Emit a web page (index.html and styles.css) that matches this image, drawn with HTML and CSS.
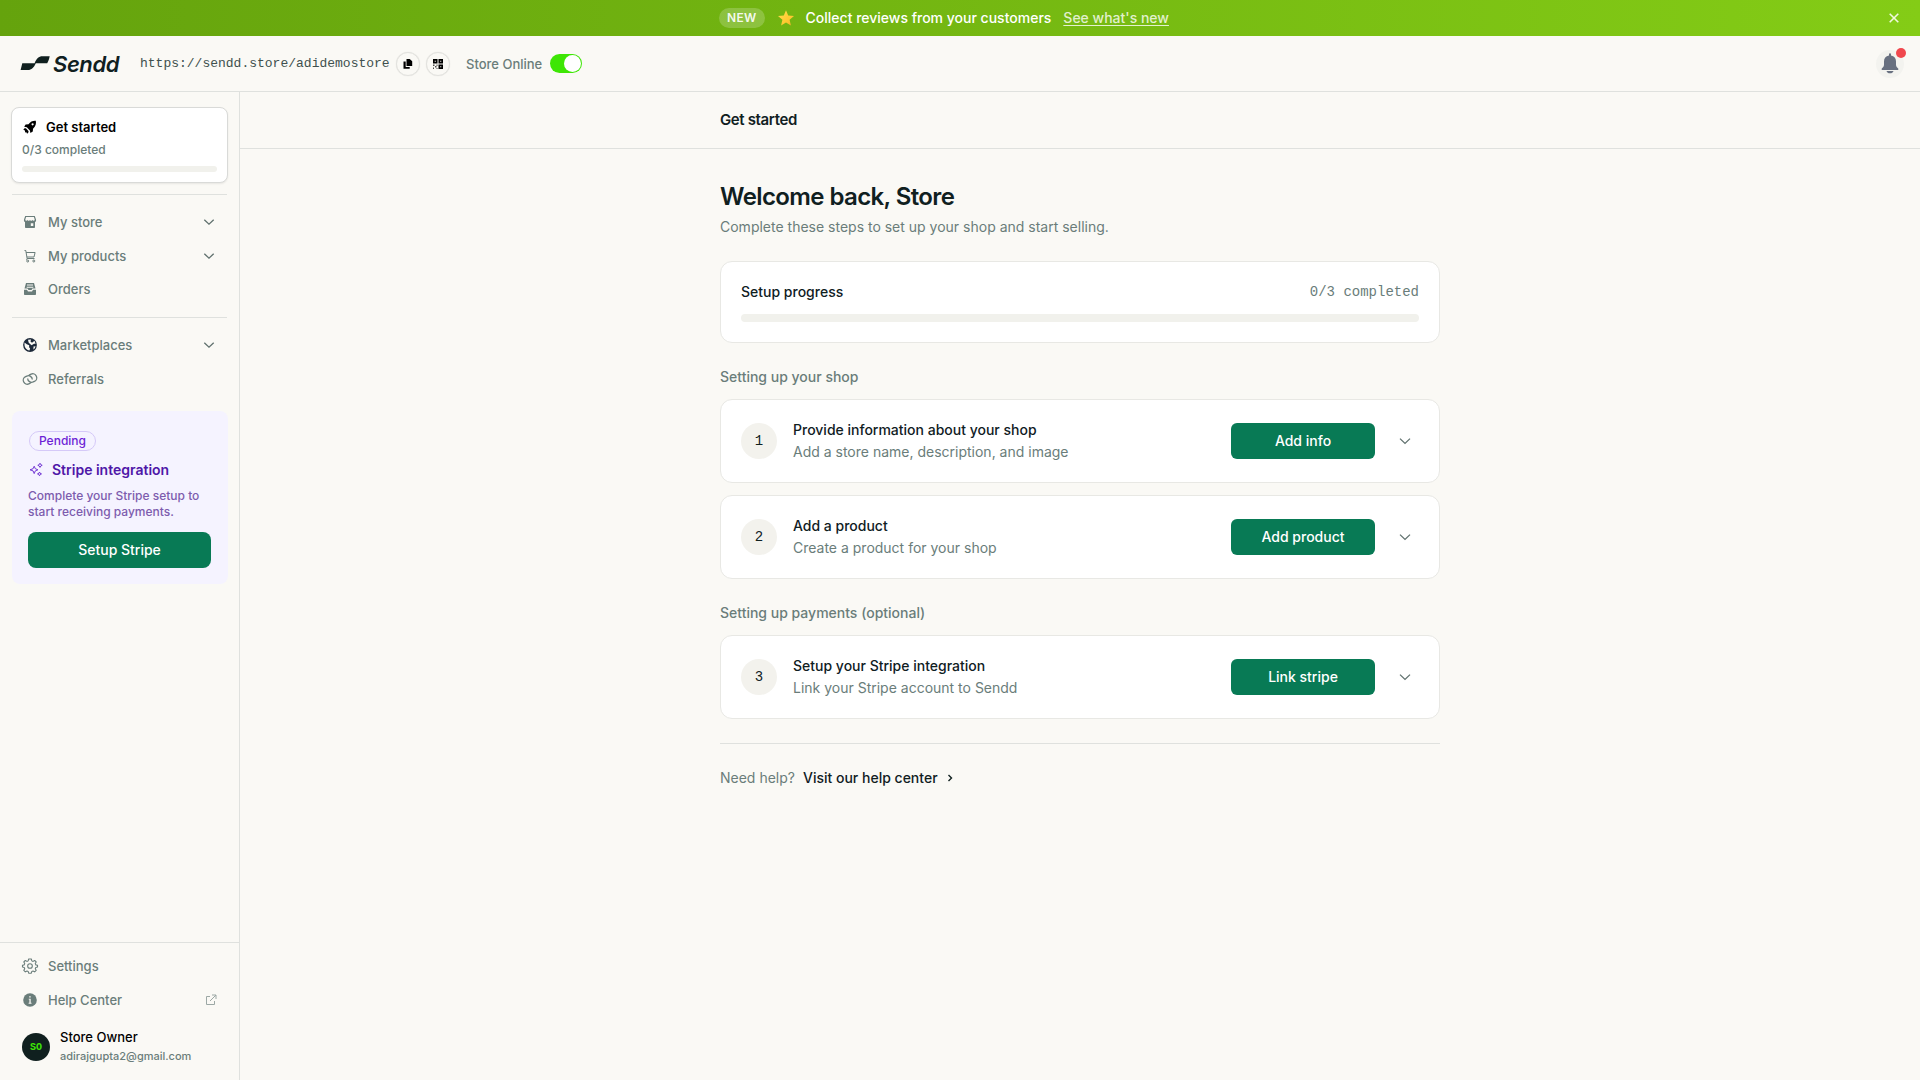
FILE: index.html
```html
<!DOCTYPE html>
<html lang="en">
<head>
<meta charset="utf-8">
<title>Sendd – Get started</title>
<link rel="stylesheet" href="styles.css">
</head>
<body>
<div class="banner">
  <div class="banner-content">
    <span class="banner-tag">NEW</span>
    <svg class="star" width="18" height="18" viewBox="0 0 18 18"><defs><linearGradient id="sg" x1="0" y1="0" x2="1" y2="1"><stop offset="0" stop-color="#ffdf4e"/><stop offset=".65" stop-color="#fdc82f"/><stop offset="1" stop-color="#f3a62b"/></linearGradient></defs><path fill="url(#sg)" d="M9 1.200l2.200 5.200 5.800.5-4.400 3.900 1.300 5.800L9 13.600l-4.900 3 1.300-5.800L1 6.900l5.800-.5z"/></svg>
    <span class="banner-text">Collect reviews from your customers</span>
    <a class="banner-link">See what's new</a>
  </div>
  <svg class="banner-close" width="12" height="12" viewBox="0 0 12 12"><path d="M1.700 1.700l8.600 8.600M10.300 1.700L1.700 10.300"/></svg>
</div>
<header class="header">
  <div class="logo">
    <svg width="30" height="15" viewBox="0 0 30 15"><path d="M.6 14L2.300 7.200H14.600C16.500 2.800 18.600.3 22.500.3h7.200C29 3.500 28.300 5.600 27.200 7.200H15.800C13.800 11.600 11.600 14 7.800 14z"/></svg>
    <span class="wordmark">Sendd</span>
  </div>
  <span class="store-url">https://sendd.store/adidemostore</span>
  <button class="round"><svg width="10" height="10" viewBox="0 0 10 10"><path d="M3.500 0h3.200l2.500 2.200V7H3.500z"/><path d="M.5 2.500h2.200V8h4v1.800H.5z"/></svg></button>
  <button class="round round-second"><svg width="10" height="10" viewBox="0 0 10 10"><path fill-rule="evenodd" d="M0 0h4.500v4.500H0zM1.700 1.700v1.100h1.100V1.700zM5.500 0H10v4.500H5.500zM7.200 1.700v1.100h1.100V1.700zM5.500 5.500H10V10H5.500zM7.200 7.200v1.100h1.100V7.200z"/><path opacity=".7" d="M0 5.500h1.500V7H0zM2 7h1.500v1.500H2zM3.500 5.500h1V7h-1zM0 8.500h1V10H0zM3.500 9h1v1h-1z"/></svg></button>
  <span class="online">Store Online</span>
  <span class="toggle"><span class="knob"></span></span>
  <div class="bell">
    <svg width="18" height="22" viewBox="0 0 18 22"><path d="M8 2.500V1.200a1 1 0 012 0v1.300c3.300.5 5 2.800 5 6v3.300c0 1.800 1.300 2.700 2.200 3.700.3.500.3 1-.1 1.500H.9c-.4-.5-.4-1-.1-1.500C1.700 14.500 3 13.600 3 11.800V8.500c0-3.200 1.700-5.500 5-6zM5.500 18h7c-.5 1.500-1.700 2.300-3.500 2.300S6 19.500 5.500 18z"/></svg>
    <span class="bell-dot"></span>
  </div>
</header>
<div class="layout">
  <aside class="sidebar">
    <div class="progress-card">
      <div class="progress-title">
        <svg width="14" height="14" viewBox="0 0 14 14"><path fill-rule="evenodd" d="M12.800.8c.5 2.700.1 5.200-2.800 7.900l-.2 2.800-2.400 1.400-.5-2.500-3.100-3.100L1.200 6.800l1.400-2.400 2.900-.2C7.500 1.600 10 .5 12.800.8zM9.600 3.200a1.100 1.100 0 100 2.200 1.100 1.100 0 000-2.200z"/><path d="M.4 9.900c.5-1.400 1.500-2 2.700-1.300L5.400 11c.5 1-.2 2.300-1.500 2.700.1-.8-.1-1.300-.7-1.100-.9 0-1.300-.5-1.200-1.500 0-.8-.7-1.100-1.600-1.200z"/></svg>
        <span>Get started</span>
      </div>
      <div class="progress-count">0/3 completed</div>
      <div class="bar bar-small"></div>
    </div>
    <nav class="nav-group nav-first">
      <a class="nav-item"><svg class="nav-icon" viewBox="0 0 14 14"><path class="fill" fill-rule="evenodd" d="M2.200 1h9.600L13 4.400c.3 1.300-.2 2.200-1 2.700v5.100a.8.800 0 01-.8.800H2.800a.8.800 0 01-.8-.8V7.100c-.8-.5-1.300-1.400-1-2.700zM3.100 2.100L2.300 4.500c0 1.600 1.900 1.600 2.100.2.200 1.400 2.400 1.400 2.600 0 .2 1.400 2.400 1.400 2.600 0 .2 1.400 2.100 1.400 2.100-.2l-.8-2.400zM7.800 8.300v2.700h2.500V8.300z"/></svg><span>My store</span><svg class="chev" viewBox="0 0 12 12"><path d="M1.300 3.700L6 8.100l4.700-4.400"/></svg></a>
      <a class="nav-item"><svg class="nav-icon" viewBox="0 0 14 14"><path class="line" d="M1.500 1.500h1.300l1.300 8h7.400M3.100 3.500h9L11 8H3.900M4.100 9.500l-.7 1.200"/><circle class="line" cx="4.700" cy="12" r="1"/><circle class="line" cx="10.800" cy="12" r="1"/></svg><span>My products</span><svg class="chev" viewBox="0 0 12 12"><path d="M1.300 3.700L6 8.100l4.700-4.400"/></svg></a>
      <a class="nav-item"><svg class="nav-icon" viewBox="0 0 14 14"><path class="fill" fill-rule="evenodd" d="M3 1h8l1.500 5.500h-3L8.500 8h-3l-1-1.500h-3zM4 2.500v1h6v-1zM3.700 4.700v1h6.600v-1z"/><path class="fill" d="M1 7.800h3L5 9.500h4l1-1.700h3v4.400a.8.800 0 01-.8.800H1.800a.8.800 0 01-.8-.8z"/></svg><span>Orders</span></a>
    </nav>
    <nav class="nav-group nav-second">
      <a class="nav-item"><svg class="nav-icon" viewBox="0 0 14 14"><circle cx="7" cy="7" r="6.900" fill="#1c2939"/><path fill="#faf9f5" d="M1.500 4.500l2.300 1.700 2.400 1-.1 2 1 1.200-.6 2.200c-3.200-.5-5.300-3.500-5-6.800zM5 1.700L8 1.400l-.5 2L9 4.800l2.500-2 1.100 3L11 5.800 8.600 7.200 6.800 5.800 5.600 4.500zM10.500 8.500l2-.2c-.3 1.400-1 2.500-2.100 3.300z"/></svg><span>Marketplaces</span><svg class="chev" viewBox="0 0 12 12"><path d="M1.300 3.700L6 8.100l4.700-4.400"/></svg></a>
      <a class="nav-item"><svg class="nav-icon" viewBox="0 0 14 14"><g class="line bold" transform="rotate(-24 7 7)"><path d="M6.800 10.600C6 11 5 11 4 11a4 4 0 010-8h1.300a4 4 0 013.600 5.500"/><path d="M7.200 3.400C8 3 9 3 10 3a4 4 0 010 8H8.700a4 4 0 01-3.600-5.500"/></g></svg><span>Referrals</span></a>
    </nav>
    <section class="stripe">
      <span class="badge">Pending</span>
      <div class="stripe-title"><svg width="16" height="16" viewBox="0 0 16 16"><path d="M6.200 4.200l1.100 2.500 2.600 1.100-2.600 1.100-1.100 2.700-1.100-2.700-3.100-1.100 3.100-1.100zM12 1.200l.7 1.400 1.500.7-1.500.7-.7 1.400-.7-1.400-1.500-.7 1.500-.7zM11.500 10l.6 1.300 1.400.6-1.400.6-.6 1.300-.6-1.300-1.400-.6 1.400-.6z"/></svg><span>Stripe integration</span></div>
      <p class="stripe-text">Complete your Stripe setup to<br>start receiving payments.</p>
      <button class="button button-wide">Setup Stripe</button>
    </section>
    <div class="side-footer">
      <a class="nav-item"><svg class="nav-icon gear" viewBox="0 0 24 24"><path class="line gear-line" d="M10 1.500h4l.7 2.800 1.900.8 2.400-1.400 2.300 2.300-1.400 2.400.8 1.900 2.600.7v2.500l-2.600.7-.8 1.900 1.400 2.400-2.300 2.300-2.400-1.400-1.900.8-.7 2.600h-4l-.7-2.600-1.900-.8L5 20.800l-2.300-2.300 1.400-2.400-.8-1.900-2.600-.7V11l2.600-.7.800-1.900L2.700 6 5 3.700l2.400 1.400 1.900-.8z"/><circle class="line gear-line" cx="12" cy="12" r="3.500"/></svg><span>Settings</span></a>
      <a class="nav-item"><svg class="nav-icon" viewBox="0 0 14 14"><circle class="fill" cx="7" cy="7" r="6.800"/><path fill="#faf9f5" d="M6.200 3.200h1.500v1.400H6.200zM5.700 5.700h2v4h.8v1H5.600v-1h.8V6.600h-.7z"/></svg><span>Help Center</span><svg class="external" viewBox="0 0 12 12"><path d="M5 2.500H1.500v8h8V7M7 1h4v4M11 1L5 7"/></svg></a>
      <div class="user">
        <span class="avatar">SO</span>
        <div class="user-info"><span class="user-name">Store Owner</span><span class="user-mail">adirajgupta2@gmail.com</span></div>
      </div>
    </div>
  </aside>
  <main class="main">
    <div class="page-bar"><div class="column page-name">Get started</div></div>
    <div class="column content">
      <h1 class="title">Welcome back, Store</h1>
      <p class="subtitle">Complete these steps to set up your shop and start selling.</p>
      <section class="card setup">
        <div class="setup-row"><span>Setup progress</span><span class="setup-count">0/3 completed</span></div>
        <div class="bar"></div>
      </section>
      <h2 class="group-title">Setting up your shop</h2>
      <section class="card step">
        <span class="number">1</span>
        <div class="step-text"><span>Provide information about your shop</span><span class="muted">Add a store name, description, and image</span></div>
        <button class="button">Add info</button>
        <span class="expand"><svg class="chev" viewBox="0 0 12 12"><path d="M1 3.600L6 8.400l5-4.800"/></svg></span>
      </section>
      <section class="card step">
        <span class="number">2</span>
        <div class="step-text"><span>Add a product</span><span class="muted">Create a product for your shop</span></div>
        <button class="button">Add product</button>
        <span class="expand"><svg class="chev" viewBox="0 0 12 12"><path d="M1 3.600L6 8.400l5-4.800"/></svg></span>
      </section>
      <h2 class="group-title">Setting up payments (optional)</h2>
      <section class="card step">
        <span class="number">3</span>
        <div class="step-text"><span>Setup your Stripe integration</span><span class="muted">Link your Stripe account to Sendd</span></div>
        <button class="button">Link stripe</button>
        <span class="expand"><svg class="chev" viewBox="0 0 12 12"><path d="M1 3.600L6 8.400l5-4.800"/></svg></span>
      </section>
      <div class="help"><span class="muted">Need help?</span><a>Visit our help center</a><svg width="8" height="8" viewBox="0 0 8 8"><path d="M2.500 1l3 3-3 3"/></svg></div>
    </div>
  </main>
</div>
</body>
</html>
```
FILE: styles.css
```css
* { box-sizing: border-box; }
body {
  margin: 0;
  height: 1080px;
  display: flex;
  flex-direction: column;
  overflow: hidden;
  background: #faf9f5;
  color: #10201f;
  font: 500 14px/20px Inter, sans-serif;
}
svg { display: block; flex: none; }
button { border: 0; padding: 0; font: inherit; }
h1, h2, p { margin: 0; }

.banner {
  flex: none;
  height: 36px;
  display: flex;
  align-items: center;
  padding: 0 20px;
  background: linear-gradient(90deg, #65a30d, #84cc16);
  color: #fff;
}
.banner-content { flex: 1; display: flex; align-items: center; justify-content: center; padding-right: 20px; }
.banner-tag {
  height: 20px;
  padding: 0 8px;
  border-radius: 10px;
  background: rgba(255, 255, 255, .2);
  font-size: 12px;
  font-weight: 600;
  letter-spacing: .3px;
  color: rgba(255, 255, 255, .92);
}
.star { margin: 0 11px 0 12px; }
.banner-link { margin-left: 12px; color: rgba(255, 255, 255, .8); text-decoration: underline; text-underline-offset: 2px; }
.banner-close path { stroke: #f0f8df; stroke-width: 1.600; fill: none; }

.header {
  flex: none;
  height: 56px;
  display: flex;
  align-items: center;
  padding: 0 15px 0 20px;
  border-bottom: 1px solid #dfe1de;
}
.logo { display: flex; align-items: center; gap: 3px; width: 120px; color: #10201f; }
.logo svg { fill: #10201f; }
.wordmark { font: italic 600 22px/24px Inter, sans-serif; letter-spacing: -.4px; }
.store-url { width: 256px; font: 13px/20px "Liberation Mono", monospace; color: #40504e; }
.round {
  width: 24px;
  height: 24px;
  display: grid;
  place-items: center;
  border: 1px solid #e3e3df;
  border-radius: 50%;
  background: #faf9f5;
  box-shadow: 0 0 1px rgba(0, 0, 0, .12);
}
.round-second { margin-left: 6px; }
.online { margin-left: 16px; font-size: 13px; color: #6a7d7a; }
.toggle { display: flex; justify-content: flex-end; width: 32px; height: 19px; margin-left: 8px; padding: 1px; border-radius: 10px; background: #3ee605; }
.knob { width: 17px; height: 17px; border-radius: 50%; background: #fff; }
.bell { position: relative; width: 28px; height: 28px; display: grid; place-items: center; margin: 1px 1px 0 auto; border-radius: 50%; background: #f3f3ef; }
.bell svg { fill: #687080; }
.bell-dot { position: absolute; top: -2px; right: -2px; width: 10px; height: 10px; border-radius: 50%; background: #f0484e; }

.layout { flex: 1; display: flex; min-height: 0; }
.sidebar {
  width: 240px;
  flex: none;
  display: flex;
  flex-direction: column;
  padding-top: 15px;
  border-right: 1px solid #dfe1de;
}
.progress-card {
  height: 76px;
  margin: 0 11px;
  padding: 9px 10px 0;
  border: 1px solid #d9dad8;
  border-radius: 8px;
  background: #fff;
  box-shadow: 0 1px 2px rgba(0, 0, 0, .08);
}
.progress-title { display: flex; align-items: center; gap: 9px; padding-left: 1px; font-size: 13px; font-weight: 600; color: #000; }
.progress-count { margin-top: 3px; font-size: 12px; color: #6a7d7a; }
.bar { height: 8px; border-radius: 4px; background: #f1f1ec; }
.bar-small { height: 6px; border-radius: 3px; margin-top: 6px; }
.nav-group { margin: 0 12px; border-top: 1px solid #dfe1de; }
.nav-first { margin-top: 11px; padding: 10.500px 0 11px; }
.nav-second { padding: 10.200px 0 10px; }
.nav-item {
  height: 34px;
  display: flex;
  align-items: center;
  padding: 0 11px;
  font-size: 13px;
  color: #6a7d7a;
}
.nav-first .nav-item { height: 33.500px; }
.nav-icon { width: 14px; height: 14px; margin-right: 11px; overflow: visible; }
.gear { width: 16px; height: 16px; margin: 0 10px 0 -1px; }
.fill { fill: #6a7d7a; }
.line { fill: none; stroke: #6a7d7a; stroke-width: 1; }
.bold { stroke-width: 1.300; }
.gear-line { stroke-width: 1.600; stroke-linejoin: round; }
.chev { width: 12px; height: 12px; fill: none; stroke: #60716e; stroke-width: 1.300; }
.nav-item .chev { margin: 0 1px 0 auto; }
.external { width: 12px; height: 12px; margin: 0 -1px 0 auto; fill: none; stroke: #9ca8a5; stroke-width: 1; }

.stripe { height: 173px; margin: 5px 11px 0 12px; padding: 20px 16px 16px; border-radius: 8px; background: #f5f3ff; }
.badge {
  display: block;
  width: 67px;
  height: 20px;
  margin-left: 1px;
  border: 1px solid #d5c9f8;
  border-radius: 10px;
  text-align: center;
  font-size: 12px;
  line-height: 18px;
  color: #6d1fd6;
}
.stripe-title { display: flex; align-items: center; gap: 8px; margin-top: 9px; font-weight: 600; color: #4f17a8; }
.stripe-title svg { fill: none; stroke: #7438d4; stroke-width: 1; }
.stripe-text { margin: 8px 0 12px; font-size: 12px; line-height: 16px; color: #7d5cae; }
.button { width: 144px; height: 36px; border-radius: 6px; background: #087a55; color: #fff; font-weight: 500; }
.button-wide { width: 183px; border-radius: 8px; }

.side-footer { height: 138px; margin-top: auto; padding: 6.200px 12px 0; border-top: 1px solid #dfe1de; }
.user { display: flex; align-items: center; gap: 10px; margin-top: 11px; padding-left: 10px; }
.avatar { width: 28px; height: 28px; border-radius: 50%; background: #10201f; color: #3ee605; font: 700 10px/29px "Liberation Mono", monospace; text-align: center; }
.user-info { display: flex; flex-direction: column; }
.user-name { font-size: 13px; line-height: 18px; color: #000; }
.user-mail { font-size: 11px; line-height: 18px; padding-top: 1px; color: #6a7d7a; }

.main { flex: 1; }
.column { width: 720px; margin: 0 auto; }
.page-bar { height: 57px; border-bottom: 1px solid #dfe1de; }
.page-name { font-size: 15px; line-height: 56px; font-weight: 600; letter-spacing: -.025em; }
.content { padding-top: 32px; }
.title { font-size: 24px; line-height: 32px; font-weight: 600; letter-spacing: -.025em; }
.subtitle { margin: 4px 0 24px; font-weight: 400; color: #6a7d7a; }
.card { border: 1px solid #e8e8e4; border-radius: 12px; background: #fff; }
.setup { padding: 20px; }
.setup-row { display: flex; justify-content: space-between; margin-bottom: 12px; }
.setup-count { font: 14px/20px "Liberation Mono", monospace; color: #6a7d7a; }
.group-title { margin: 24px 0 12px; font-size: 14px; line-height: 20px; font-weight: 500; color: #6a7d7a; }
.step { display: flex; align-items: center; gap: 16px; height: 84px; padding: 0 20px; }
.step + .step { margin-top: 12px; }
.number { width: 36px; height: 36px; border-radius: 50%; background: #f3f2ed; font: 14px/36px "Liberation Mono", monospace; text-align: center; }
.step-text { flex: 1; display: flex; flex-direction: column; gap: 2px; }
.muted { font-weight: 400; color: #6a7d7a; }
.expand { width: 28px; display: grid; place-items: center; }
.help { display: flex; align-items: center; gap: 8px; margin-top: 24px; padding-top: 24px; border-top: 1px solid #dfe1de; }
.help svg { fill: none; stroke: #10201f; stroke-width: 1.400; }
```
